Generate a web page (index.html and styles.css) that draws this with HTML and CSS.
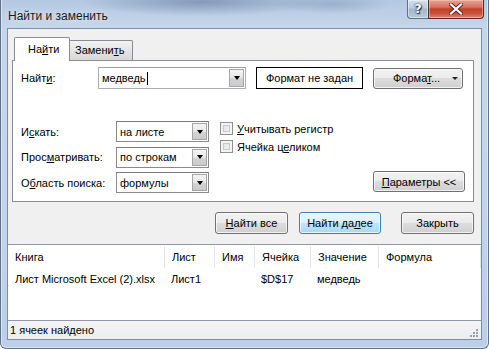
FILE: index.html
```html
<!DOCTYPE html>
<html lang="ru">
<head>
<meta charset="utf-8">
<title>Найти и заменить</title>
<link rel="stylesheet" href="styles.css">
</head>
<body>
<div class="window">
  <div class="titlebar">
    <span class="title">Найти и заменить</span>
    <div class="caption">
      <div class="cap-help">?</div>
      <div class="cap-close">
        <svg width="14" height="12" viewBox="0 0 14 12"><path d="M2 1.5 L12 10.5 M12 1.5 L2 10.5" stroke="#5a2418" stroke-width="4" stroke-linecap="square"/><path d="M2 1.5 L12 10.5 M12 1.5 L2 10.5" stroke="#ffffff" stroke-width="2.2" stroke-linecap="square"/></svg>
      </div>
    </div>
  </div>
  <div class="client">
    <div class="tabs">
      <div class="tab active">На<u>й</u>ти</div>
      <div class="tab">Замени<u>т</u>ь</div>
    </div>
    <div class="panel">
      <div class="row-find">
        <span class="lbl-find">Найт<u>и</u>:</span>
        <div class="combo combo-find">
          <span class="combo-text">медведь<span class="caret"></span></span>
          <span class="drop"><span class="tri"></span></span>
        </div>
        <div class="fmt-box">Формат не задан</div>
        <div class="btn btn-fmt"><span>Форма<u>т</u>...</span><span class="tri small"></span></div>
      </div>
      <div class="opts">
        <span class="lbl">И<u>с</u>кать:</span>
        <div class="combo"><span class="combo-text">на листе</span><span class="drop"><span class="tri"></span></span></div>
        <div class="checks">
          <label class="chk"><span class="box"></span><span><u>У</u>читывать регистр</span></label>
          <label class="chk"><span class="box"></span><span>Ячейка ц<u>е</u>ликом</span></label>
        </div>
        <span class="lbl">Прос<u>м</u>атривать:</span>
        <div class="combo"><span class="combo-text">по строкам</span><span class="drop"><span class="tri"></span></span></div>
        <span class="lbl">О<u>б</u>ласть поиска:</span>
        <div class="combo"><span class="combo-text">формулы</span><span class="drop"><span class="tri"></span></span></div>
        <div class="btn btn-params"><u>П</u>араметры &lt;&lt;</div>
      </div>
    </div>
    <div class="actions">
      <div class="btn btn-act"><u>Н</u>айти все</div>
      <div class="btn btn-act btn-default">Найти да<u>л</u>ее</div>
      <div class="btn btn-act btn-close">Закрыть</div>
    </div>
    <div class="results">
      <div class="r-row r-head">
        <span class="c1">Книга</span><span class="c2">Лист</span><span class="c3">Имя</span><span class="c4">Ячейка</span><span class="c5">Значение</span><span class="c6">Формула</span>
      </div>
      <div class="r-row">
        <span class="c1">Лист Microsoft Excel (2).xlsx</span><span class="c2">Лист1</span><span class="c3"></span><span class="c4">$D$17</span><span class="c5">медведь</span><span class="c6"></span>
      </div>
    </div>
    <div class="status">
      <span>1 ячеек найдено</span>
      <span class="grip"></span>
    </div>
  </div>
</div>
</body>
</html>
```
FILE: styles.css
```css
html, body {
  margin: 0;
  padding: 0;
  background: #ffffff;
}
body {
  font-family: "Liberation Sans", Arial, sans-serif;
  font-size: 11px;
  color: #000;
}
u { text-decoration: underline; text-underline-offset: 1px; }

.window {
  width: 489px;
  height: 349px;
  box-sizing: border-box;
  border: 1px solid #5d7290;
  border-top: none;
  border-radius: 0 0 6px 6px;
  background:
    radial-gradient(ellipse 120px 14px at 200px 2px, rgba(90,115,150,0.55), rgba(90,115,150,0) 100%),
    radial-gradient(ellipse 60px 10px at 330px 4px, rgba(110,135,170,0.4), rgba(110,135,170,0) 100%),
    linear-gradient(to bottom, #b4c8e2 0px, #c6d6ea 28px, #c3d4ea 60%, #bccfe7 100%);
  display: flex;
  flex-direction: column;
  padding: 0 6px 8px 6px;
  box-shadow: inset 1px 0 0 #dbe6f3, inset -1px 0 0 #dbe6f3, inset 0 -1px 0 #dbe6f3;
}

.titlebar {
  height: 28px;
  display: flex;
  align-items: flex-start;
  flex: none;
}
.title {
  font-size: 12px;
  color: #1a1a1a;
  margin-top: 9px;
  margin-left: 1px;
  text-shadow: 0 0 6px rgba(255,255,255,0.9);
}
.caption {
  margin-left: auto;
  margin-right: -2px;
  display: flex;
  height: 19px;
}
.cap-help {
  width: 21px;
  height: 19px;
  box-sizing: border-box;
  border: 1px solid #5f6f86;
  border-top: none;
  border-right: none;
  border-radius: 0 0 0 4px;
  background: linear-gradient(to bottom, #d6e0ec 0%, #bccadb 45%, #a6b6cb 50%, #b9c8da 100%);
  color: #fff;
  font-weight: bold;
  font-size: 13px;
  font-family: "DejaVu Sans", sans-serif;
  text-align: center;
  line-height: 18px;
  text-shadow: 0 0 1px #203045, 0 0 2px #203045, 1px 1px 1px #203045;
  box-shadow: inset 0 0 0 1px rgba(255,255,255,0.45);
}
.cap-close {
  width: 56px;
  height: 19px;
  box-sizing: border-box;
  border: 1px solid #5c2a22;
  border-top: none;
  border-radius: 0 0 4px 0;
  background: linear-gradient(to bottom, #e6a394 0%, #d57261 40%, #c3402a 50%, #c9503a 75%, #e08b72 100%);
  display: flex;
  align-items: center;
  justify-content: center;
  box-shadow: inset 0 0 0 1px rgba(255,210,200,0.45);
}

.client {
  flex: 1;
  background: #f0f0f0;
  border: 1px solid #7b8ea9;
  display: flex;
  flex-direction: column;
  min-height: 0;
}

.tabs {
  display: flex;
  align-items: flex-end;
  margin: 8px 7px 0 5px;
  height: 23px;
  position: relative;
  z-index: 1;
}
.tab {
  height: 20px;
  box-sizing: border-box;
  padding: 0 7px;
  border: 1px solid #898c95;
  border-bottom: none;
  background: linear-gradient(to bottom, #f3f3f3, #e4e4e4 50%, #d8d8d8);
  line-height: 19px;
  margin-left: -1px;
}
.tab.active {
  height: 24px;
  width: 56px;
  margin-left: 1px;
  margin-bottom: -1px;
  background: #ffffff;
  padding: 0 0 0 13px;
  line-height: 23px;
  border-radius: 2px 2px 0 0;
}
.tab:not(.active) {
  width: 64px;
  padding: 0 0 0 5px;
  border-radius: 2px 2px 0 0;
}

.panel {
  margin: 0 7px 0 4px;
  height: 142px;
  box-sizing: border-box;
  background: #ffffff;
  border: 1px solid #898c95;
  padding: 6px 8px 0 8px;
  flex: none;
}

.row-find {
  display: flex;
  align-items: center;
  height: 22px;
}
.lbl-find { width: 77px; flex: none; }
.combo {
  height: 21px;
  box-sizing: border-box;
  border: 1px solid #8a8a8a;
  border-top-color: #7a7a7a;
  background: #fff;
  display: flex;
  align-items: stretch;
}
.combo-find {
  width: 148px;
  height: 22px;
  border-color: #abadb3;
  border-top-color: #9c9ea3;
}
.combo-text {
  flex: 1;
  padding-left: 3px;
  display: flex;
  align-items: center;
  white-space: nowrap;
}
.caret {
  display: inline-block;
  width: 1px;
  height: 13px;
  background: #000;
  margin-left: 1px;
}
.drop {
  width: 15px;
  margin: 1px;
  box-sizing: border-box;
  border: 1px solid #a5a5a5;
  background: linear-gradient(to bottom, #f4f4f4, #e6e6e6 50%, #d4d4d4 51%, #cbcbcb);
  display: flex;
  align-items: center;
  justify-content: center;
}
.tri {
  width: 0;
  height: 0;
  border-left: 3.5px solid transparent;
  border-right: 3.5px solid transparent;
  border-top: 4px solid #000;
}
.tri.small {
  border-left-width: 3px;
  border-right-width: 3px;
  border-top-width: 3px;
  border-top-color: #222;
}
.fmt-box {
  margin-left: 10px;
  width: 107px;
  height: 22px;
  box-sizing: border-box;
  border: 1px solid #000;
  display: flex;
  align-items: center;
  justify-content: center;
  background: #fff;
}

.btn {
  box-sizing: border-box;
  border: 1px solid #707070;
  border-radius: 3px;
  background: linear-gradient(to bottom, #f2f2f2 0%, #ebebeb 49%, #dddddd 50%, #cfcfcf 100%);
  box-shadow: inset 0 0 0 1px rgba(255,255,255,0.7);
  display: flex;
  align-items: center;
  justify-content: center;
  white-space: nowrap;
}
.btn-fmt {
  margin-left: 10px;
  width: 90px;
  height: 21px;
  justify-content: flex-start;
  padding-left: 19px;
  gap: 0;
}
.btn-fmt .tri { margin-left: auto; margin-right: 4px; }

.opts {
  margin-top: 32px;
  display: grid;
  grid-template-columns: 95px 93px 1fr auto;
  grid-template-rows: 21px 21px 21px;
  row-gap: 4.5px;
  align-items: center;
}
.checks {
  grid-column: 3 / 5;
  grid-row: 1 / 3;
  align-self: start;
  margin-left: 11px;
  margin-top: 1px;
  display: flex;
  flex-direction: column;
  gap: 5px;
}
.chk {
  display: flex;
  align-items: center;
  height: 13px;
  gap: 4px;
}
.box {
  width: 13px;
  height: 13px;
  box-sizing: border-box;
  border: 1px solid #8f8f8f;
  background: linear-gradient(135deg, #dcdcdc, #f8f8f8);
  box-shadow: inset 0 0 0 2px #f4f4f4, inset 0 0 0 3px #c9c9c9;
}
.btn-params {
  grid-column: 4;
  grid-row: 3;
  width: 92px;
  height: 21px;
  margin-top: -2px;
}

.actions {
  display: flex;
  justify-content: flex-end;
  margin: 10px 7px 0 0;
  gap: 11px;
  flex: none;
}
.btn-act {
  height: 22px;
  width: 73px;
}
.btn-default {
  width: 82px;
  border-color: #3c7fb1;
  background: linear-gradient(to bottom, #eaf6fd 0%, #d9f0fc 49%, #bee6fd 50%, #a7d9f5 100%);
  box-shadow: inset 0 0 0 1px rgba(255,255,255,0.75);
}
.btn-close { margin-left: 9px; }

.results {
  margin-top: 10px;
  flex: 1;
  background: #ffffff;
  border: 1px solid #8e9aab;
  border-left: none;
  border-right: none;
  padding-top: 1px;
}
.r-row {
  display: flex;
  height: 21px;
  align-items: center;
}
.r-head {
  height: 22px;
}
.r-row span {
  flex: none;
  box-sizing: border-box;
  padding-left: 7px;
  white-space: nowrap;
  height: 100%;
  display: flex;
  align-items: center;
}
.r-head span + span { border-left: 1px solid #e3e6ea; }
.c1 { width: 156px; }
.c2 { width: 50px; }
.c3 { width: 40px; }
.c4 { width: 56px; }
.c5 { width: 68px; }
.c6 { flex: 1 !important; }
.r-head .c6 { border-right: 1px solid #e3e6ea; }

.status {
  height: 18px;
  flex: none;
  display: flex;
  align-items: center;
  padding-left: 2px;
  background: linear-gradient(to bottom, #f4f4f4, #ecedef);
  position: relative;
}
.grip {
  margin-left: auto;
  width: 10px;
  height: 10px;
  margin-top: 6px;
  margin-right: 2px;
  background:
    radial-gradient(circle at 8px 8px, #9aa0a8 1px, transparent 1.2px),
    radial-gradient(circle at 5px 8px, #9aa0a8 1px, transparent 1.2px),
    radial-gradient(circle at 8px 5px, #9aa0a8 1px, transparent 1.2px),
    radial-gradient(circle at 2px 8px, #9aa0a8 1px, transparent 1.2px),
    radial-gradient(circle at 5px 5px, #9aa0a8 1px, transparent 1.2px),
    radial-gradient(circle at 8px 2px, #9aa0a8 1px, transparent 1.2px);
}
```
